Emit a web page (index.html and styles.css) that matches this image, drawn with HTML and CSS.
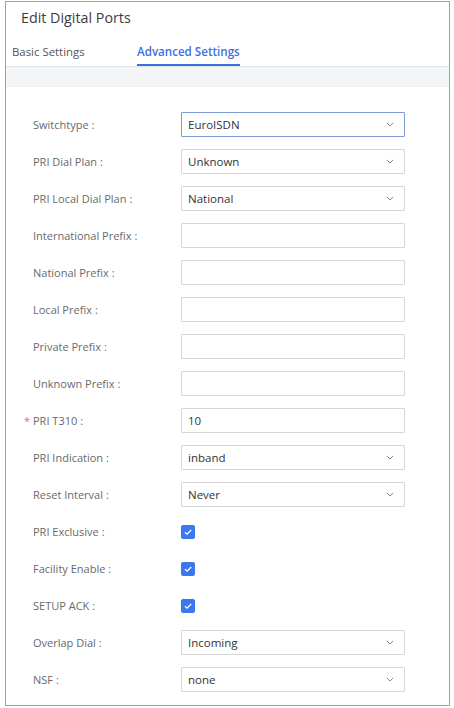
FILE: index.html
```html
<!DOCTYPE html>
<html>
<head>
<meta charset="utf-8">
<link rel="stylesheet" href="styles.css">
</head>
<body>
<div class="frame">
  <div class="title">Edit Digital Ports</div>
  <div class="tabs">
    <div class="tab">Basic Settings</div>
    <div class="tab active">Advanced Settings</div>
  </div>
  <div class="band"></div>
  <div class="form">
    <div class="row"><div class="label">Switchtype<span class="colon">:</span></div><div class="select focus"><span>EuroISDN</span><svg class="chev" viewBox="0 0 8 5"><path d="M0.8 0.8 L4 4 L7.2 0.8" /></svg></div></div>
    <div class="row"><div class="label">PRI Dial Plan<span class="colon">:</span></div><div class="select"><span>Unknown</span><svg class="chev" viewBox="0 0 8 5"><path d="M0.8 0.8 L4 4 L7.2 0.8" /></svg></div></div>
    <div class="row"><div class="label">PRI Local Dial Plan<span class="colon">:</span></div><div class="select"><span>National</span><svg class="chev" viewBox="0 0 8 5"><path d="M0.8 0.8 L4 4 L7.2 0.8" /></svg></div></div>
    <div class="row"><div class="label">International Prefix<span class="colon">:</span></div><div class="input"></div></div>
    <div class="row"><div class="label">National Prefix<span class="colon">:</span></div><div class="input"></div></div>
    <div class="row"><div class="label">Local Prefix<span class="colon">:</span></div><div class="input"></div></div>
    <div class="row"><div class="label">Private Prefix<span class="colon">:</span></div><div class="input"></div></div>
    <div class="row"><div class="label">Unknown Prefix<span class="colon">:</span></div><div class="input"></div></div>
    <div class="row"><div class="label"><span class="req">*</span>PRI T310<span class="colon">:</span></div><div class="input"><span>10</span></div></div>
    <div class="row"><div class="label">PRI Indication<span class="colon">:</span></div><div class="select"><span>inband</span><svg class="chev" viewBox="0 0 8 5"><path d="M0.8 0.8 L4 4 L7.2 0.8" /></svg></div></div>
    <div class="row"><div class="label">Reset Interval<span class="colon">:</span></div><div class="select"><span>Never</span><svg class="chev" viewBox="0 0 8 5"><path d="M0.8 0.8 L4 4 L7.2 0.8" /></svg></div></div>
    <div class="row"><div class="label">PRI Exclusive<span class="colon">:</span></div><div class="check"><svg viewBox="0 0 14 14"><path d="M4 7.2 L6.1 9.2 L10.2 5" /></svg></div></div>
    <div class="row"><div class="label">Facility Enable<span class="colon">:</span></div><div class="check"><svg viewBox="0 0 14 14"><path d="M4 7.2 L6.1 9.2 L10.2 5" /></svg></div></div>
    <div class="row"><div class="label">SETUP ACK<span class="colon">:</span></div><div class="check"><svg viewBox="0 0 14 14"><path d="M4 7.2 L6.1 9.2 L10.2 5" /></svg></div></div>
    <div class="row"><div class="label">Overlap Dial<span class="colon">:</span></div><div class="select"><span>Incoming</span><svg class="chev" viewBox="0 0 8 5"><path d="M0.8 0.8 L4 4 L7.2 0.8" /></svg></div></div>
    <div class="row"><div class="label">NSF<span class="colon">:</span></div><div class="select"><span>none</span><svg class="chev" viewBox="0 0 8 5"><path d="M0.8 0.8 L4 4 L7.2 0.8" /></svg></div></div>
  </div>
</div>
</body>
</html>
```
FILE: styles.css
```css
html, body {
  margin: 0;
  padding: 0;
  background: #ffffff;
}
body {
  font-family: "Open Sans", "Noto Sans", sans-serif;
  padding: 1px 4px 0 5px;
}
.frame {
  width: 443px;
  height: 703px;
  border: 1px solid #8fa2be;
  box-sizing: content-box;
  background: #fff;
}
.title {
  font-size: 14.3px;
  color: #3d3d3d;
  padding: 6px 0 0 15px;
  height: 26px;
  line-height: 20px;
}
.tabs {
  display: flex;
  height: 33px;
  border-bottom: 1px solid #e1e4e8;
  box-sizing: border-box;
  padding-left: 6px;
}
.tab {
  font-size: 11.4px;
  color: #555;
  line-height: 26px;
  height: 32px;
  padding-top: 5px;
  box-sizing: border-box;
}
.tab:first-child {
  width: 125px;
}
.tab.active {
  font-size: 11.6px;
  color: #3f6fdb;
  font-weight: 600;
  border-bottom: 2px solid #3f6fdb;
}
.band {
  height: 19px;
  background: #f4f5f7;
  border-bottom: 1px solid #eceef1;
}
.form {
  padding: 19px 0 0 27px;
}
.row {
  display: flex;
  align-items: center;
  height: 37px;
}
.label {
  width: 148px;
  font-size: 11px;
  color: #6a6a6a;
  position: relative;
  white-space: nowrap;
}
.colon {
  margin-left: 3px;
}
.req {
  position: absolute;
  left: -9px;
  top: 0;
  color: #f06a6a;
  font-size: 11px;
}
.select, .input {
  width: 224px;
  height: 25px;
  box-sizing: border-box;
  border: 1px solid #d6d6d6;
  border-radius: 1px;
  display: flex;
  align-items: center;
  padding: 0 10px 0 6px;
  font-size: 11.5px;
  color: #333;
}
.select.focus {
  border-color: #7b9ad6;
}
.select span {
  flex: 1;
}
.chev {
  width: 8px;
  height: 5px;
  fill: none;
  stroke: #8a8a8a;
  stroke-width: 1;
}
.check {
  width: 14px;
  height: 14px;
  background: #3b78f0;
  border-radius: 2px;
}
.check svg {
  display: block;
  width: 14px;
  height: 14px;
  fill: none;
  stroke: #fff;
  stroke-width: 1.3;
}
```
